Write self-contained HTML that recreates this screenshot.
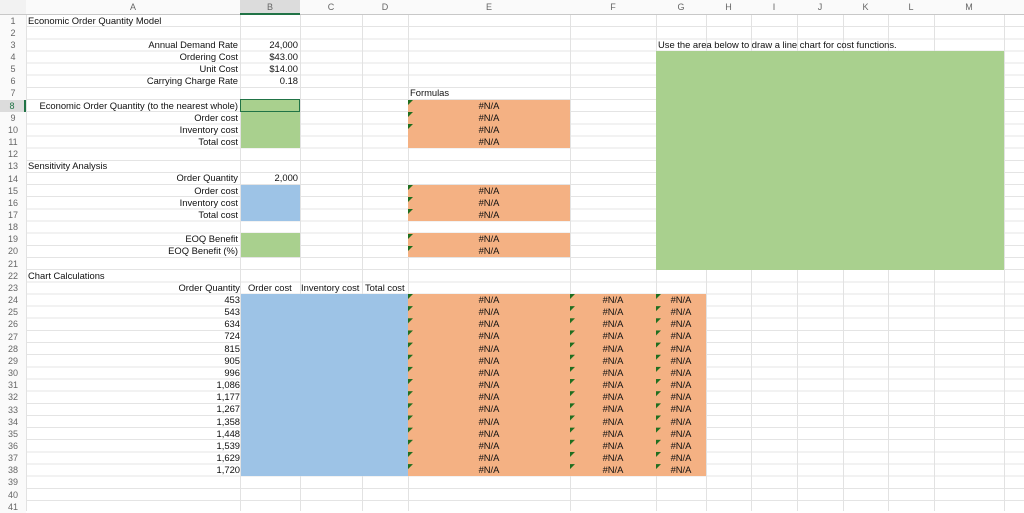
<!DOCTYPE html>
<html><head><meta charset="utf-8"><style>
body{margin:0;width:1024px;height:511px;overflow:hidden;background:#fff;font-family:"Liberation Sans",Arial,sans-serif;font-size:9.4px;color:#111;position:relative}
.a{position:absolute}
.grid{position:absolute;left:0;top:14.5px;width:1024px;height:497px;background:repeating-linear-gradient(to bottom,transparent 0,transparent 11.15px,#e4e4e4 11.15px,#e4e4e4 12.15px)}
.v{position:absolute;top:0;height:511px;width:1px;background:#e2e2e2}
.hd{position:absolute;top:0;height:14px;line-height:14px;text-align:center;color:#666;font-size:9px;border-bottom:1px solid #c8c8c8;background:#fafafa}
.rn{position:absolute;left:0;width:26px;top:14.5px;line-height:12.15px;text-align:center;color:#666;font-size:9px;background:#fafafa}
.t{position:absolute;line-height:12.15px;white-space:nowrap}
.g{background:#a9d08e}.o{background:#f4b183}.b{background:#9dc3e6}
.tri{position:absolute;width:0;height:0;border-top:5px solid #1f6e1f;border-right:5px solid transparent}
</style></head><body>
<div class="grid"></div>
<div class="v" style="left:26px"></div><div class="v" style="left:240px"></div><div class="v" style="left:300px"></div><div class="v" style="left:362px"></div><div class="v" style="left:408px"></div><div class="v" style="left:570px"></div><div class="v" style="left:656px"></div><div class="v" style="left:706px"></div><div class="v" style="left:751px"></div><div class="v" style="left:797px"></div><div class="v" style="left:843px"></div><div class="v" style="left:888px"></div><div class="v" style="left:934px"></div><div class="v" style="left:1004px"></div>

<div class="a g" style="left:656px;top:51px;width:348px;height:218.7px"></div>
<div class="a g" style="left:241px;top:99.55px;width:59px;height:48.6px"></div>
<div class="a" style="left:240px;top:98.5px;width:58px;height:11px;border:1px solid #217346"></div>
<div class="a g" style="left:241px;top:233.2px;width:59px;height:24.3px"></div>
<div class="a b" style="left:241px;top:184.6px;width:59px;height:36.45px"></div>
<div class="a b" style="left:241px;top:293.95px;width:167px;height:182.25px"></div>
<div class="a o" style="left:408px;top:99.55px;width:162px;height:48.6px"></div>
<div class="a o" style="left:408px;top:184.6px;width:162px;height:36.45px"></div>
<div class="a o" style="left:408px;top:233.2px;width:162px;height:24.3px"></div>
<div class="a o" style="left:408px;top:293.95px;width:298px;height:182.25px"></div>

<div class="hd" style="left:0;width:26px;background:#f2f2f2"></div>
<div class="hd" style="left:26px;width:214px">A</div>
<div class="hd" style="left:240px;width:60px;background:#dcdcdc;border-bottom:2px solid #217346;height:13px">B</div>
<div class="hd" style="left:300px;width:62px">C</div>
<div class="hd" style="left:362px;width:46px">D</div>
<div class="hd" style="left:408px;width:162px">E</div>
<div class="hd" style="left:570px;width:86px">F</div>
<div class="hd" style="left:656px;width:50px">G</div>
<div class="hd" style="left:706px;width:45px">H</div>
<div class="hd" style="left:751px;width:46px">I</div>
<div class="hd" style="left:797px;width:46px">J</div>
<div class="hd" style="left:843px;width:45px">K</div>
<div class="hd" style="left:888px;width:46px">L</div>
<div class="hd" style="left:934px;width:70px">M</div>
<div class="hd" style="left:1004px;width:20px"></div>

<div class="rn">1<br>2<br>3<br>4<br>5<br>6<br>7<br><span style="display:block;background:#dcdcdc;color:#217346;border-right:2px solid #217346">8</span>9<br>10<br>11<br>12<br>13<br>14<br>15<br>16<br>17<br>18<br>19<br>20<br>21<br>22<br>23<br>24<br>25<br>26<br>27<br>28<br>29<br>30<br>31<br>32<br>33<br>34<br>35<br>36<br>37<br>38<br>39<br>40<br>41</div>

<div class="t" style="left:28px;top:14.5px">Economic Order Quantity Model</div>
<div class="t" style="left:26px;width:212px;text-align:right;top:38.8px">Annual Demand Rate<br>Ordering Cost<br>Unit Cost<br>Carrying Charge Rate<br><br>Economic Order Quantity (to the nearest whole)<br>Order cost<br>Inventory cost<br>Total cost</div>
<div class="t" style="left:28px;top:160.3px">Sensitivity Analysis</div>
<div class="t" style="left:26px;width:212px;text-align:right;top:172.45px">Order Quantity<br>Order cost<br>Inventory cost<br>Total cost<br><br>EOQ Benefit<br>EOQ Benefit (%)</div>
<div class="t" style="left:28px;top:269.65px">Chart Calculations</div>
<div class="t" style="left:26px;width:214px;text-align:right;top:281.8px">Order Quantity</div>
<div class="t" style="left:248px;top:281.8px">Order cost</div>
<div class="t" style="left:301px;top:281.8px">Inventory cost</div>
<div class="t" style="left:365px;top:281.8px">Total cost</div>
<div class="t" style="left:26px;width:214px;text-align:right;top:293.95px">453<br>543<br>634<br>724<br>815<br>905<br>996<br>1,086<br>1,177<br>1,267<br>1,358<br>1,448<br>1,539<br>1,629<br>1,720</div>
<div class="t" style="left:240px;width:58px;text-align:right;top:38.8px">24,000<br>$43.00<br>$14.00<br>0.18</div>
<div class="t" style="left:240px;width:58px;text-align:right;top:172.45px">2,000</div>
<div class="t" style="left:410px;top:87.4px">Formulas</div>
<div class="t" style="left:658px;top:38.8px">Use the area below to draw a line chart for cost functions.</div>

<div class="t" style="left:408px;width:162px;text-align:center;top:99.55px">#N/A<br>#N/A<br>#N/A<br>#N/A</div>
<div class="t" style="left:408px;width:162px;text-align:center;top:184.6px">#N/A<br>#N/A<br>#N/A</div>
<div class="t" style="left:408px;width:162px;text-align:center;top:233.2px">#N/A<br>#N/A</div>
<div class="t" style="left:408px;width:162px;text-align:center;top:293.95px">#N/A<br>#N/A<br>#N/A<br>#N/A<br>#N/A<br>#N/A<br>#N/A<br>#N/A<br>#N/A<br>#N/A<br>#N/A<br>#N/A<br>#N/A<br>#N/A<br>#N/A</div>
<div class="t" style="left:570px;width:86px;text-align:center;top:293.95px">#N/A<br>#N/A<br>#N/A<br>#N/A<br>#N/A<br>#N/A<br>#N/A<br>#N/A<br>#N/A<br>#N/A<br>#N/A<br>#N/A<br>#N/A<br>#N/A<br>#N/A</div>
<div class="t" style="left:656px;width:50px;text-align:center;top:293.95px">#N/A<br>#N/A<br>#N/A<br>#N/A<br>#N/A<br>#N/A<br>#N/A<br>#N/A<br>#N/A<br>#N/A<br>#N/A<br>#N/A<br>#N/A<br>#N/A<br>#N/A</div>

<div class="tri" style="left:408px;top:100px"></div><div class="tri" style="left:408px;top:112px"></div><div class="tri" style="left:408px;top:124px"></div>
<div class="tri" style="left:408px;top:185px"></div><div class="tri" style="left:408px;top:197px"></div><div class="tri" style="left:408px;top:209px"></div>
<div class="tri" style="left:408px;top:233.5px"></div><div class="tri" style="left:408px;top:245.5px"></div>
<svg class="a" style="left:408px;top:294.4px" width="6" height="182"><defs><pattern id="p2" x="0" y="0" width="6" height="12.15" patternUnits="userSpaceOnUse"><polygon points="0,0 5,0 0,5" fill="#1f6e1f"/></pattern></defs><rect width="6" height="182" fill="url(#p2)"/></svg>
<svg class="a" style="left:570px;top:294.4px" width="6" height="182"><defs><pattern id="p3" x="0" y="0" width="6" height="12.15" patternUnits="userSpaceOnUse"><polygon points="0,0 5,0 0,5" fill="#1f6e1f"/></pattern></defs><rect width="6" height="182" fill="url(#p3)"/></svg>
<svg class="a" style="left:656px;top:294.4px" width="6" height="182"><defs><pattern id="p4" x="0" y="0" width="6" height="12.15" patternUnits="userSpaceOnUse"><polygon points="0,0 5,0 0,5" fill="#1f6e1f"/></pattern></defs><rect width="6" height="182" fill="url(#p4)"/></svg>
</body></html>
